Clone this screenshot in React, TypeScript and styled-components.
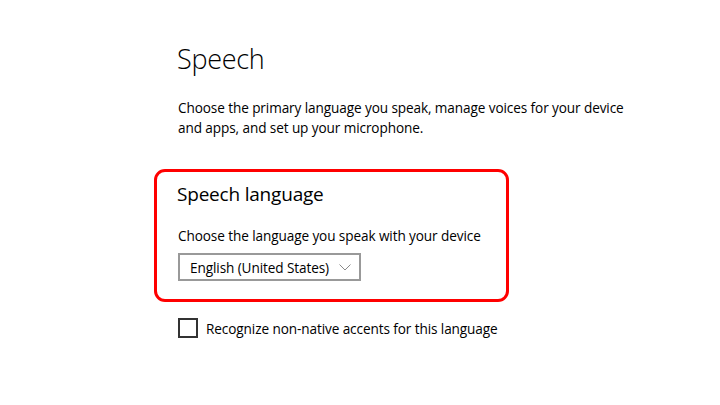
import React from 'react';
import styled, { createGlobalStyle } from 'styled-components';

const GlobalStyle = createGlobalStyle`
  html, body {
    margin: 0;
    padding: 0;
    background: #ffffff;
  }

  body {
    font-family: 'Open Sans', 'Noto Sans', 'Liberation Sans', sans-serif;
    color: #000000;
  }
`;

const Page = styled.div`
  width: 720px;
  height: 405px;
  padding: 39px 0 0 177px;
  box-sizing: border-box;
  overflow: hidden;
`;

const Title = styled.h1`
  margin: 0;
  font-size: 27px;
  font-weight: 300;
  line-height: 40px;
  letter-spacing: -0.3px;
`;

const Description = styled.p`
  margin: 19px 0 0 1px;
  width: 450px;
  font-size: 13.6px;
  line-height: 20px;
  letter-spacing: -0.1px;
`;

const Highlight = styled.section`
  margin: 31px 0 0 -23px;
  width: 355px;
  height: 133px;
  box-sizing: border-box;
  padding: 8px 0 0 20px;
  border: 3px solid #ff0000;
  border-radius: 11px;
`;

const SectionTitle = styled.h2`
  margin: 0;
  font-size: 19px;
  font-weight: 400;
  line-height: 28px;
  letter-spacing: -0.2px;
`;

const Label = styled.div`
  margin: 18px 0 0 1px;
  font-size: 13.6px;
  line-height: 20px;
  letter-spacing: -0.1px;
`;

const Select = styled.div`
  margin: 7px 0 0 1px;
  width: 183px;
  height: 28px;
  box-sizing: border-box;
  border: 2px solid #999999;
  display: flex;
  align-items: center;
  gap: 10px;
  padding: 0 0 0 10px;
  font-size: 13.6px;
  letter-spacing: -0.1px;
`;

const Chevron = styled.svg`
  width: 12px;
  height: 7px;
  flex: none;
`;

const CheckRow = styled.label`
  margin: 16px 0 0 1px;
  display: flex;
  align-items: center;
  gap: 8px;
  font-size: 13.6px;
  letter-spacing: -0.1px;
`;

const Box = styled.span`
  width: 20px;
  height: 20px;
  box-sizing: border-box;
  border: 2px solid #333333;
  flex: none;
`;

const App = () => (
  <>
    <GlobalStyle />
    <Page>
      <Title>Speech</Title>
      <Description>
        Choose the primary language you speak, manage voices for your device
        and apps, and set up your microphone.
      </Description>
      <Highlight>
        <SectionTitle>Speech language</SectionTitle>
        <Label>Choose the language you speak with your device</Label>
        <Select>
          English (United States)
          <Chevron viewBox="0 0 12 7">
            <path d="M0.5 0.5 L6 6 L11.5 0.5" fill="none" stroke="#8a8a8a" strokeWidth="1" />
          </Chevron>
        </Select>
      </Highlight>
      <CheckRow>
        <Box />
        Recognize non-native accents for this language
      </CheckRow>
    </Page>
  </>
);

export default App;
